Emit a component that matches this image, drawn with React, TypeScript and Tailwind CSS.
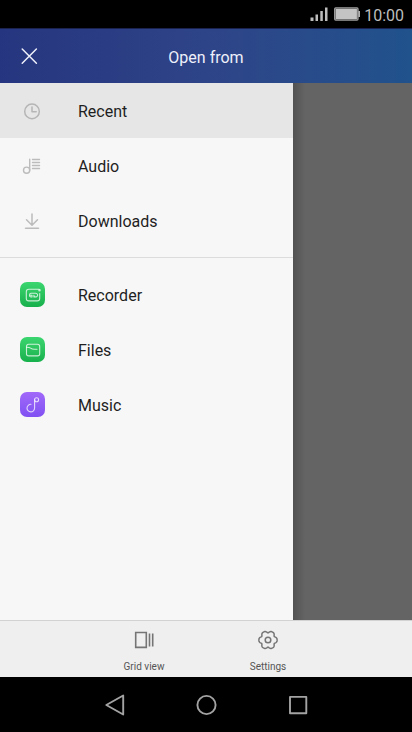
import React from 'react';

interface DrawerItem {
  label: string;
  icon: React.ReactNode;
  active?: boolean;
}

const line = {
  fill: 'none',
  stroke: 'currentColor',
  strokeLinecap: 'round' as const,
  strokeLinejoin: 'round' as const,
};

// Six-lobed outline of the settings icon: broad lobes with narrow notches
const gearPoints = Array.from({ length: 120 }, (_, i) => {
  const a = (i * Math.PI) / 60;
  const r = 9.1 - 1.9 * Math.pow((1 - Math.cos(6 * a)) / 2, 2);
  return `${(12 + r * Math.cos(a)).toFixed(2)},${(12 + r * Math.sin(a)).toFixed(2)}`;
}).join(' ');

const ClockIcon = () => (
  <svg viewBox="0 0 24 24" className="size-6 text-[#b5b5b5]" {...line} strokeWidth="1.5">
    <circle cx="12" cy="12.4" r="7.3" />
    <path d="M12 8V12.7H16.2" />
  </svg>
);

const AudioIcon = () => (
  <svg viewBox="0 0 24 24" className="size-6 text-[#bcbcbc]" {...line} strokeWidth="1.4">
    <circle cx="6.6" cy="16.2" r="3.1" />
    <path d="M9.7 16.2V5.3M12.5 5.5H19.5M12.5 8.5H19.5M12.5 11.5H19.5M12.5 14.5H19.5" />
  </svg>
);

const DownloadIcon = () => (
  <svg viewBox="0 0 24 24" className="size-6 text-[#bcbcbc]" {...line} strokeWidth="1.5">
    <path d="M12 5V16M6.5 10.8L12 16.2L17.5 10.8M5.5 19.2H18.5" />
  </svg>
);

const AppTile = ({ className, children }: { className: string; children: React.ReactNode }) => (
  <span className={`-mr-px flex size-[25px] items-center justify-center rounded-[7px] text-white/75 ${className}`}>
    <svg viewBox="0 0 24 24" className="size-6" {...line} strokeWidth="1.1">
      {children}
    </svg>
  </span>
);

const RecorderIcon = () => (
  <AppTile className="bg-linear-to-b from-[#3bd670] to-[#16b04c]">
    <path d="M18.2 6.3H7.8C6.2 6.3 5.3 7.2 5.3 8.8V15.4C5.3 17 6.2 17.9 7.8 17.9H16.2C17.8 17.9 18.7 17 18.7 15.4V10.5" />
    <circle cx="18.5" cy="7.2" r="0.7" />
    <path d="M11 12.2H8.9M11 12.2V14H9.9A1.9 1.9 0 0 1 9.9 10.3H14.4A1.85 1.85 0 1 1 12.9 12.2V14H14.4" />
  </AppTile>
);

const FilesIcon = () => (
  <AppTile className="bg-linear-to-b from-[#3bd670] to-[#16b04c]">
    <rect x="5.5" y="6.3" width="13.2" height="11.6" rx="2.2" />
    <path d="M5.5 9.3C7.2 9.3 8.6 9.3 9.6 10.1C10.8 11.1 12 11.3 13.3 11.3H16" />
  </AppTile>
);

const MusicIcon = () => (
  <AppTile className="bg-linear-to-b from-[#a169f9] to-[#8050f2]">
    <path d="M10 11.3A3.8 3.8 0 1 0 13.6 15.1V6.8" />
    <circle cx="15.6" cy="6.8" r="2" />
  </AppTile>
);

const sources: DrawerItem[] = [
  { label: 'Recent', icon: <ClockIcon />, active: true },
  { label: 'Audio', icon: <AudioIcon /> },
  { label: 'Downloads', icon: <DownloadIcon /> },
];

const apps: DrawerItem[] = [
  { label: 'Recorder', icon: <RecorderIcon /> },
  { label: 'Files', icon: <FilesIcon /> },
  { label: 'Music', icon: <MusicIcon /> },
];

const DrawerList = ({ items }: { items: DrawerItem[] }) => (
  <ul>
    {items.map((item) => (
      <li key={item.label}>
        <button
          type="button"
          className={`flex h-[55px] w-full items-center gap-[34px] px-5 text-left text-base text-[#1f1f1f] ${
            item.active ? 'bg-[#e6e6e6]' : ''
          }`}
        >
          {item.icon}
          <span className="pt-0.5">{item.label}</span>
        </button>
      </li>
    ))}
  </ul>
);

const StatusBar = () => (
  <div className="flex h-7 items-center justify-end bg-black pr-2 text-[#bdbdbd]">
    <svg viewBox="0 0 18 16" className="mr-1.5 h-4 w-[18px]" fill="currentColor">
      <rect x="0.5" y="11.5" width="3" height="3.5" />
      <rect x="5.5" y="8.5" width="2.5" height="6.5" />
      <rect x="10.3" y="5" width="2.5" height="10" />
      <rect x="15" y="1.5" width="2.5" height="13.5" />
    </svg>
    <svg viewBox="0 0 26 14" className="mr-1 h-3.5 w-[26px]">
      <rect x="0.7" y="0.9" width="23.3" height="12.2" rx="1" fill="#4a4a4a" stroke="#a0a0a0" strokeWidth="1.3" />
      <rect x="1.8" y="2" width="21.1" height="10" fill="#c4c4c4" />
      <rect x="24.3" y="4" width="1.7" height="6" fill="#b0b0b0" />
    </svg>
    <span className="pt-[3px] text-base leading-6">10:00</span>
  </div>
);

const App: React.FC = () => {
  return (
    <div className="flex min-h-screen flex-col bg-black font-['Roboto',sans-serif]">
      <StatusBar />

      <header className="grid h-[55px] grid-cols-[1fr_auto_1fr] items-center border-t border-[#1a2350] bg-linear-to-r from-[#26357f] via-[#2e4488] to-[#20528c] text-[#eef0fa]">
        <button type="button" aria-label="Close" className="ml-[17px] flex size-6 items-center justify-center">
          <svg viewBox="0 0 24 24" className="size-6" {...line} strokeWidth="1.5">
            <path d="M5.2 5L19.4 19.2M19.4 5L5.2 19.2" />
          </svg>
        </button>
        <h1 className="pt-[3px] text-base">Open from</h1>
      </header>

      <main className="flex flex-1 bg-[#646464]">
        <nav className="w-[293px] bg-[#f7f7f7]">
          <DrawerList items={sources} />
          <hr className="my-[9px] border-[#dcdcdc]" />
          <DrawerList items={apps} />
        </nav>
        <div className="flex-1 bg-linear-to-r from-[#525252] to-[#646464] to-10%" />
      </main>

      <footer className="flex h-[57px] justify-center border-t border-[#d2d2d2] bg-[#efefef] text-[#555555]">
        <button type="button" className="flex w-[124px] flex-col items-center gap-[7px] pt-[7px] text-[10px] leading-4">
          <svg viewBox="0 0 24 24" className="size-6 text-[#757575]" {...line} strokeLinecap="butt" strokeLinejoin="miter" strokeWidth="1.6">
            <path d="M3.7 4.5H14.3V19.4H3.7ZM17.5 5.5V18.5M20.7 5.5V18.5" />
          </svg>
          Grid view
        </button>
        <button type="button" className="flex w-[124px] flex-col items-center gap-[7px] pt-[7px] text-[10px] leading-4">
          <svg viewBox="0 0 24 24" className="size-6 text-[#757575]" {...line} strokeWidth="1.5">
            <polygon points={gearPoints} />
            <circle cx="12" cy="12" r="2.8" />
          </svg>
          Settings
        </button>
      </footer>

      <div className="flex h-[55px] items-center justify-center gap-[68px] bg-black text-[#a3a3a3]">
        <button type="button" aria-label="Back">
          <svg viewBox="0 0 24 24" className="size-6" {...line} strokeWidth="1.9">
            <path d="M21.2 2.5V21.5L4.3 12Z" />
          </svg>
        </button>
        <button type="button" aria-label="Home">
          <svg viewBox="0 0 24 24" className="size-6" {...line} strokeWidth="1.9">
            <circle cx="12.5" cy="12" r="9.1" />
          </svg>
        </button>
        <button type="button" aria-label="Overview">
          <svg viewBox="0 0 24 24" className="size-6" {...line} strokeWidth="1.9">
            <rect x="4" y="3.9" width="16.3" height="16.3" />
          </svg>
        </button>
      </div>
    </div>
  );
};

export default App;
